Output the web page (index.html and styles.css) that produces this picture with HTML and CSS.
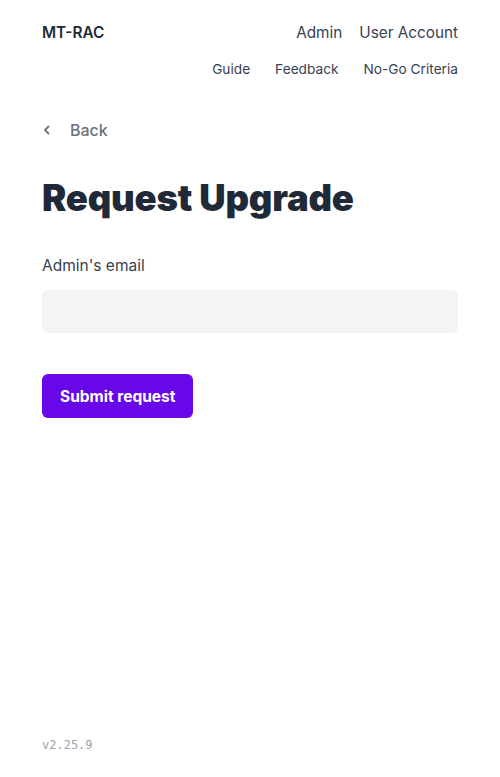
FILE: index.html
```html
<!DOCTYPE html>
<html>
<head>
<meta charset="utf-8">
<link rel="stylesheet" href="styles.css">
</head>
<body>
<div class="page">
  <header class="header">
    <div class="top-row">
      <span class="brand">MT-RAC</span>
      <nav class="main-nav">
        <a>Admin</a>
        <a>User Account</a>
      </nav>
    </div>
    <nav class="sub-nav">
      <a>Guide</a>
      <a>Feedback</a>
      <a>No-Go Criteria</a>
    </nav>
  </header>
  <main class="main">
    <a class="back">
      <svg width="10" height="10" viewBox="0 0 10 10"><path d="M6.5 1.5 L3 5 L6.5 8.5" fill="none" stroke="#6b7280" stroke-width="1.8" stroke-linecap="round" stroke-linejoin="round"/></svg>
      <span>Back</span>
    </a>
    <h1 class="title">Request Upgrade</h1>
    <label class="label">Admin's email</label>
    <div class="input"></div>
    <button class="submit">Submit request</button>
  </main>
  <footer class="footer">v2.25.9</footer>
</div>
</body>
</html>
```
FILE: styles.css
```css
* { box-sizing: border-box; }
html, body { margin: 0; padding: 0; background: #fff; }
body { font-family: Inter, "Noto Sans", sans-serif; color: #1f2937; }
.page { height: 777px; padding: 0 42px; display: flex; flex-direction: column; }
.header { padding-top: 22px; }
.top-row { display: flex; justify-content: space-between; align-items: center; height: 20px; }
.brand { font-size: 15.3px; font-weight: 600; color: #1f2937; }
.main-nav { display: flex; gap: 17px; font-size: 15.3px; color: #374151; }
.sub-nav { display: flex; justify-content: flex-end; gap: 25px; font-size: 13.7px; color: #374151; margin-top: 18px; height: 17px; align-items: center; }
.main { flex: 1; padding-top: 43px; }
.back { display: flex; align-items: center; gap: 18px; font-size: 16px; font-weight: 500; color: #6b7280; height: 20px; }
.title { margin: 38px 0 0; font-size: 36.5px; font-weight: 900; color: #1f2937; letter-spacing: -0.2px; line-height: 40px; }
.label { display: block; margin-top: 38px; font-size: 15.5px; font-weight: 400; color: #374151; line-height: 20px; }
.input { margin-top: 14px; height: 43px; background: #f3f4f6; border-radius: 6px; }
.submit { margin-top: 41px; height: 44px; padding: 0 18px; border: none; border-radius: 6px; background: #6808e8; color: #fff; font-family: Inter, sans-serif; font-size: 15.5px; font-weight: 700; }
.footer { font-family: "DejaVu Sans Mono", monospace; font-size: 12px; color: #9ca3af; padding-bottom: 25px; }
```
